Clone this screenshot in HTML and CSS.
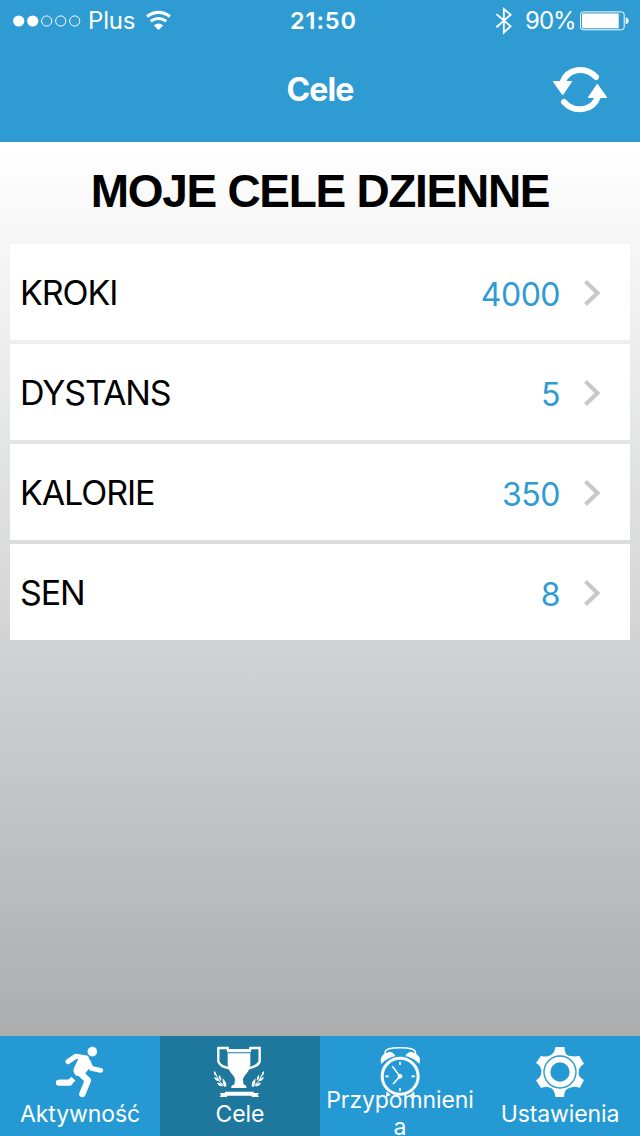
FILE: index.html
```
<!DOCTYPE html>
<html lang="pl">
<head>
    <meta charset="UTF-8">
    <meta name="viewport" content="width=device-width, initial-scale=1.0">
    <title>Cele</title>
    <link rel="stylesheet" href="styles.css">
</head>
<body>
    <div class="app">
        <header class="header">
            <div class="status-bar">
                <div class="status-left">
                    <svg class="signal" viewBox="0 0 68 12">
                        <g fill="#fff">
                            <circle cx="5.7" cy="6" r="5.6"/>
                            <circle cx="19.7" cy="6" r="5.6"/>
                        </g>
                        <g fill="none" stroke="#fff">
                            <circle cx="33.7" cy="6" r="5.1"/>
                            <circle cx="47.7" cy="6" r="5.1"/>
                            <circle cx="61.7" cy="6" r="5.1"/>
                        </g>
                    </svg>
                    <span class="carrier">Plus</span>
                    <svg class="wifi" viewBox="439 32 74 56">
                        <path d="M442 48Q476 24 510 48M453 62Q476 46 499 62" fill="none" stroke="#fff" stroke-width="9"/>
                        <path d="M462 75Q476 63 490 75L476 88Z" fill="#fff"/>
                    </svg>
                </div>
                <div class="status-time">21:50</div>
                <div class="status-right">
                    <svg class="bluetooth" viewBox="46 18 50 86">
                        <path d="M50 42L92 78L72 97V27L92 44L50 81" fill="none" stroke="#fff" stroke-width="5.500"/>
                    </svg>
                    <span class="percent">90%</span>
                    <svg class="battery" viewBox="300 32 148 60">
                        <rect x="301.5" y="34.5" width="132" height="54" rx="8" fill="none" stroke="#fff" stroke-width="3"/>
                        <rect x="306" y="39" width="111" height="45" rx="3" fill="#fff"/>
                        <path d="M438 51Q447 53 447 61.500Q447 70 438 72Z" fill="#fff"/>
                    </svg>
                </div>
            </div>
            <div class="nav-bar">
                <h1 class="nav-title">Cele</h1>
                <svg class="refresh" viewBox="219 198 162 141">
                    <g fill="none" stroke="#fff" stroke-width="18" stroke-linecap="round">
                        <path d="M248 246C262 207 315 196 348 231"/>
                        <path d="M353 291C341 329 286 343 252 306"/>
                    </g>
                    <g fill="#fff" stroke="#fff" stroke-width="4" stroke-linejoin="round">
                        <path d="M221 245H274L248 283Z"/>
                        <path d="M326 292H379L352 254Z"/>
                    </g>
                </svg>
            </div>
        </header>

        <main class="content">
            <h2 class="page-title">MOJE CELE DZIENNE</h2>
            <div class="goal-list">
                <div class="goal-row">
                    <span class="goal-name">KROKI</span>
                    <span class="goal-value">4000</span>
                    <svg class="chevron" viewBox="0 0 16 26"><path d="M1.500 1.500L13.500 13L1.500 24.500"/></svg>
                </div>
                <div class="goal-row">
                    <span class="goal-name">DYSTANS</span>
                    <span class="goal-value">5</span>
                    <svg class="chevron" viewBox="0 0 16 26"><path d="M1.500 1.500L13.500 13L1.500 24.500"/></svg>
                </div>
                <div class="goal-row">
                    <span class="goal-name">KALORIE</span>
                    <span class="goal-value">350</span>
                    <svg class="chevron" viewBox="0 0 16 26"><path d="M1.500 1.500L13.500 13L1.500 24.500"/></svg>
                </div>
                <div class="goal-row">
                    <span class="goal-name">SEN</span>
                    <span class="goal-value">8</span>
                    <svg class="chevron" viewBox="0 0 16 26"><path d="M1.500 1.500L13.500 13L1.500 24.500"/></svg>
                </div>
            </div>
        </main>

        <nav class="tab-bar">
            <div class="tab">
                <svg class="tab-icon" viewBox="165 51 150 150">
                    <circle cx="277" cy="65" r="14.500" fill="#fff"/>
                    <g fill="none" stroke="#fff" stroke-linecap="round" stroke-linejoin="round">
                        <path d="M204 95L227 79L259 84" stroke-width="15"/>
                        <path d="M262 94L274 115L302 121" stroke-width="15"/>
                        <path d="M235 124L264 151L247 192" stroke-width="19"/>
                        <path d="M176 158H209L220 146" stroke-width="17" stroke-linecap="butt"/>
                        <path d="M176 158H209" stroke-width="17"/>
                    </g>
                    <path d="M238 80Q262 76 272 92Q277 102 270 112L250 138L229 137Q216 128 223 112Z" fill="#fff"/>
                </svg>
                <div class="tab-label">Aktywność</div>
            </div>
            <div class="tab active">
                <svg class="tab-icon" viewBox="165 51 150 150">
                    <g fill="#fff">
                        <path d="M201 57H273V67H201ZM203 70H271V106Q268 123 255 136Q246 148 250 154V162L259 168V174H214V168L224 162V154Q228 148 219 136Q206 123 203 106Z"/>
                        <path d="M195 185H281V189H297L293 194L297 201H275V197H201V201H179L183 194L179 189H195Z"/>
                        <path d="M162 123Q171 129 169 139Q160 134 162 123ZM162 142Q175 143 178 154Q166 154 162 142ZM171 158Q184 157 189 168Q177 171 171 158ZM177 134Q186 142 183 153Q174 145 177 134ZM188 145Q202 158 198 171Q186 165 188 145Z"/>
                        <path d="M312 123Q303 129 305 139Q314 134 312 123ZM312 142Q299 143 296 154Q308 154 312 142ZM303 158Q290 157 285 168Q297 171 303 158ZM297 134Q288 142 291 153Q300 145 297 134ZM286 145Q272 158 276 171Q288 165 286 145Z"/>
                    </g>
                    <path d="M203 60V54H175V94Q179 109 208 115M271 60V54H299V94Q295 109 266 115" fill="none" stroke="#fff" stroke-width="7"/>
                    <g fill="none" stroke="#fff" stroke-width="3">
                        <path d="M168 134Q174 155 195 170M306 134Q300 155 279 170"/>
                    </g>
                </svg>
                <div class="tab-label">Cele</div>
            </div>
            <div class="tab">
                <svg class="tab-icon" viewBox="165 51 150 150">
                    <g fill="none" stroke="#fff">
                        <path d="M196 73C190 57 212 53 240 53S291 57 286 73" stroke-width="4.500"/>
                        <circle cx="240.500" cy="139" r="54" stroke-width="9"/>
                        <path d="M240 95V105M240 174V184M196 139H206M274 139H285" stroke-width="5"/>
                        <path d="M217 109L240 139L219 162" stroke-width="5"/>
                    </g>
                    <g fill="#fff">
                        <circle cx="240" cy="139" r="7"/>
                        <path d="M184 102Q178 84 191 73L208 65Q222 67 226 78Q200 84 184 102Z"/>
                        <path d="M298 102Q304 84 291 73L274 65Q260 67 256 78Q282 84 298 102Z"/>
                        <path d="M200 184L212 195L197 202ZM282 184L270 195L285 202Z"/>
                    </g>
                </svg>
                <div class="tab-label">Przypomnieni<br>a</div>
            </div>
            <div class="tab">
                <svg class="tab-icon" viewBox="165 51 150 150">
                    <path d="M226 51H254Q252 65 260 74Q266 79 280 79Q289 80 298 77L312 101Q300 108 297 118Q294 129 298 138Q302 145 312 150L299 174Q287 168 276 172Q258 175 254 187L252 201H226Q225 183 214 175Q199 167 183 174L168 151Q180 144 183 132Q186 122 182 113Q178 104 168 99L183 77Q199 83 213 75Q225 67 226 51Z" fill="#fff"/>
                    <circle cx="240" cy="126" r="48" fill="none" stroke="#2499d3" stroke-width="4"/>
                    <circle cx="240" cy="126" r="29" fill="#2499d3"/>
                </svg>
                <div class="tab-label">Ustawienia</div>
            </div>
        </nav>
    </div>
</body>
</html>
```
FILE: styles.css
```
* { margin: 0; padding: 0; box-sizing: border-box; }

body {
    font-family: Inter, "Liberation Sans", sans-serif;
    color: #000;
}

svg {
    display: block;
    flex: none;
    overflow: visible;
}

.app {
    width: 640px;
    height: 1136px;
    display: flex;
    flex-direction: column;
    overflow: hidden;
}

/* header */
.header {
    height: 142px;
    background: #2e9bd2;
    color: #fff;
}

.status-bar {
    height: 40px;
    display: grid;
    grid-template-columns: 1fr auto 1fr;
    align-items: center;
    padding: 1px 11px 0 13px;
    font-size: 24px;
    line-height: 39px;
    white-space: nowrap;
}

.status-left,
.status-right {
    display: flex;
    align-items: center;
}

.status-right {
    justify-content: flex-end;
}

.signal {
    width: 68px;
    height: 12px;
}

.carrier {
    width: 47px;
    margin: 0 11px 0 7px;
    letter-spacing: -0.2px;
}

.wifi {
    width: 25px;
    height: 19px;
}

.status-time {
    font-weight: 600;
    font-size: 23.5px;
    letter-spacing: 0.9px;
    padding-left: 5px;
}

.bluetooth {
    width: 17px;
    height: 29px;
    margin-right: 13px;
}

.percent {
    width: 49px;
    margin-right: 6px;
    letter-spacing: -1px;
}

.battery {
    width: 49px;
    height: 20px;
}

.nav-bar {
    height: 98px;
    display: grid;
    grid-template-columns: 1fr auto 1fr;
    align-items: center;
    padding: 0 33px;
}

.nav-title {
    grid-column: 2;
    font-size: 32px;
    font-weight: 700;
    line-height: 40px;
    letter-spacing: -0.9px;
    padding-top: 2px;
}

.refresh {
    width: 54px;
    height: 47px;
    justify-self: end;
}

/* goals */
.content {
    flex: 1;
    background: linear-gradient(#fff, #d2d3d5 56%, #acadaf);
    padding: 0 10px;
}

.page-title {
    height: 102px;
    font-family: "Liberation Sans", sans-serif;
    font-size: 46px;
    line-height: 98px;
    letter-spacing: -1.3px;
    text-align: center;
    white-space: nowrap;
}

.goal-list {
    display: flex;
    flex-direction: column;
    gap: 4px;
}

.goal-row {
    height: 96px;
    display: flex;
    align-items: center;
    background: #fff;
    padding: 0 30px 0 10px;
}

.goal-name {
    flex: 1;
    font-size: 34px;
    letter-spacing: -1.1px;
}

.goal-value {
    color: #2e9bd2;
    font-size: 32px;
    letter-spacing: -0.5px;
    padding-top: 4px;
}

.chevron {
    width: 16px;
    height: 26px;
    margin-left: 24px;
    margin-top: 2px;
}

.chevron path {
    fill: none;
    stroke: #c7c7cc;
    stroke-width: 4;
}

/* tab bar */
.tab-bar {
    height: 100px;
    display: flex;
    background: #2499d3;
    color: #fff;
}

.tab {
    width: 160px;
    display: flex;
    flex-direction: column;
    align-items: center;
    padding-top: 11px;
}

.tab.active {
    background: #1e789e;
}

.tab-icon {
    width: 50px;
    height: 50px;
}

.tab-label {
    height: 34px;
    display: flex;
    align-items: center;
    text-align: center;
    font-size: 23px;
    line-height: 27px;
    letter-spacing: -0.1px;
}
```
